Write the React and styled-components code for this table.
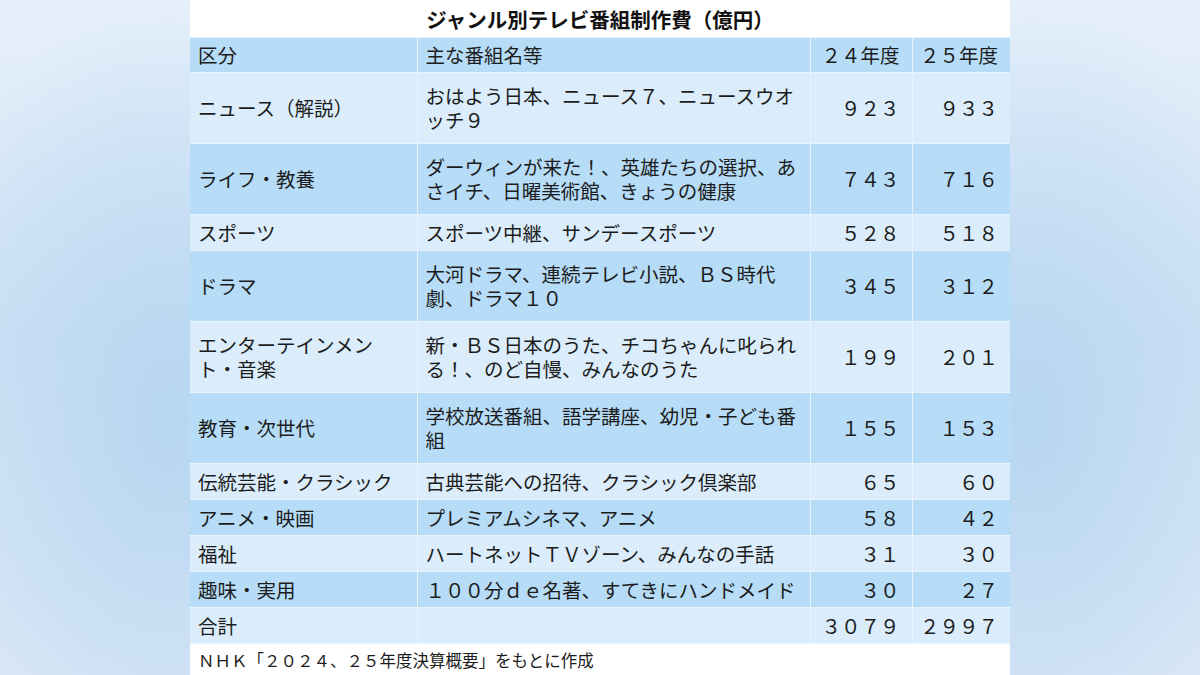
import React from "react";
import styled, { createGlobalStyle } from "styled-components";

const Global = createGlobalStyle`
  html, body { margin: 0; padding: 0; }
  body {
    width: 1200px;
    height: 675px;
    overflow: hidden;
    font-family: "Noto Sans CJK JP", "Noto Sans", sans-serif;
    background:
      radial-gradient(ellipse 260px 420px at 14% 62%, #b7d6f1 0%, rgba(183,214,241,0) 100%),
      radial-gradient(ellipse 260px 420px at 86% 62%, #b7d6f1 0%, rgba(183,214,241,0) 100%),
      linear-gradient(180deg, #e6f0fa 0%, #cfe2f5 50%, #dde9f6 100%);
  }
`;

const Page = styled.div`
  height: 675px;
  display: flex;
  justify-content: center;
`;

const Panel = styled.div`
  width: 820px;
  height: 675px;
  background: #ffffff;
  display: flex;
  flex-direction: column;
`;

const Title = styled.h1`
  margin: 0;
  height: 38px;
  display: flex;
  align-items: center;
  justify-content: center;
  font-size: 20.5px;
  font-weight: 700;
  color: #111;
`;

const Table = styled.table`
  width: 820px;
  border-collapse: collapse;
  table-layout: fixed;
  color: #1c1c1c;
  font-size: 19.5px;
  line-height: 24px;
`;

const Row = styled.tr`
  background: ${(p) => (p.$dark ? "#b6dcf8" : "#dbedfb")};
`;

const Cell = styled.td`
  height: ${(p) => (p.$tall ? "70px" : "35px")};
  padding: 0 ${(p) => (p.$num ? "12px" : "9px")} 0 ${(p) => (p.$num ? "4px" : "8px")};
  text-align: ${(p) => (p.$num ? "right" : "left")};
  vertical-align: middle;
  border: 1px solid #e7f3fd;
  white-space: ${(p) => (p.$num ? "nowrap" : "normal")};
  &:first-child { border-left: none; }
  &:last-child { border-right: none; }
`;

const HeadCell = styled(Cell)`
  height: 34px;
`;

const Footer = styled.div`
  height: 31px;
  display: flex;
  align-items: center;
  padding-left: 8px;
  font-size: 16.5px;
  color: #1c1c1c;
`;

const rows = [
  ["ニュース（解説）", "おはよう日本、ニュース７、ニュースウオッチ９", "９２３", "９３３", true],
  ["ライフ・教養", "ダーウィンが来た！、英雄たちの選択、あさイチ、日曜美術館、きょうの健康", "７４３", "７１６", true],
  ["スポーツ", "スポーツ中継、サンデースポーツ", "５２８", "５１８", false],
  ["ドラマ", "大河ドラマ、連続テレビ小説、ＢＳ時代劇、ドラマ１０", "３４５", "３１２", true],
  ["エンターテインメント・音楽", "新・ＢＳ日本のうた、チコちゃんに叱られる！、のど自慢、みんなのうた", "１９９", "２０１", true],
  ["教育・次世代", "学校放送番組、語学講座、幼児・子ども番組", "１５５", "１５３", true],
  ["伝統芸能・クラシック", "古典芸能への招待、クラシック倶楽部", "６５", "６０", false],
  ["アニメ・映画", "プレミアムシネマ、アニメ", "５８", "４２", false],
  ["福祉", "ハートネットＴＶゾーン、みんなの手話", "３１", "３０", false],
  ["趣味・実用", "１００分ｄｅ名著、すてきにハンドメイド", "３０", "２７", false],
  ["合計", "", "３０７９", "２９９７", false],
];

export default function App() {
  return (
    <>
      <Global />
      <Page>
        <Panel>
          <Title>ジャンル別テレビ番組制作費（億円）</Title>
          <Table>
            <colgroup>
              <col style={{ width: "227px" }} />
              <col style={{ width: "393px" }} />
              <col style={{ width: "102px" }} />
              <col style={{ width: "98px" }} />
            </colgroup>
            <tbody>
              <Row $dark>
                <HeadCell>区分</HeadCell>
                <HeadCell>主な番組名等</HeadCell>
                <HeadCell $num>２４年度</HeadCell>
                <HeadCell $num>２５年度</HeadCell>
              </Row>
              {rows.map(([a, b, c, d, tall], i) => (
                <Row key={a} $dark={i % 2 === 1}>
                  <Cell $tall={tall}>{a}</Cell>
                  <Cell $tall={tall}>{b}</Cell>
                  <Cell $tall={tall} $num>{c}</Cell>
                  <Cell $tall={tall} $num>{d}</Cell>
                </Row>
              ))}
            </tbody>
          </Table>
          <Footer>ＮＨＫ「２０２４、２５年度決算概要」をもとに作成</Footer>
        </Panel>
      </Page>
    </>
  );
}
